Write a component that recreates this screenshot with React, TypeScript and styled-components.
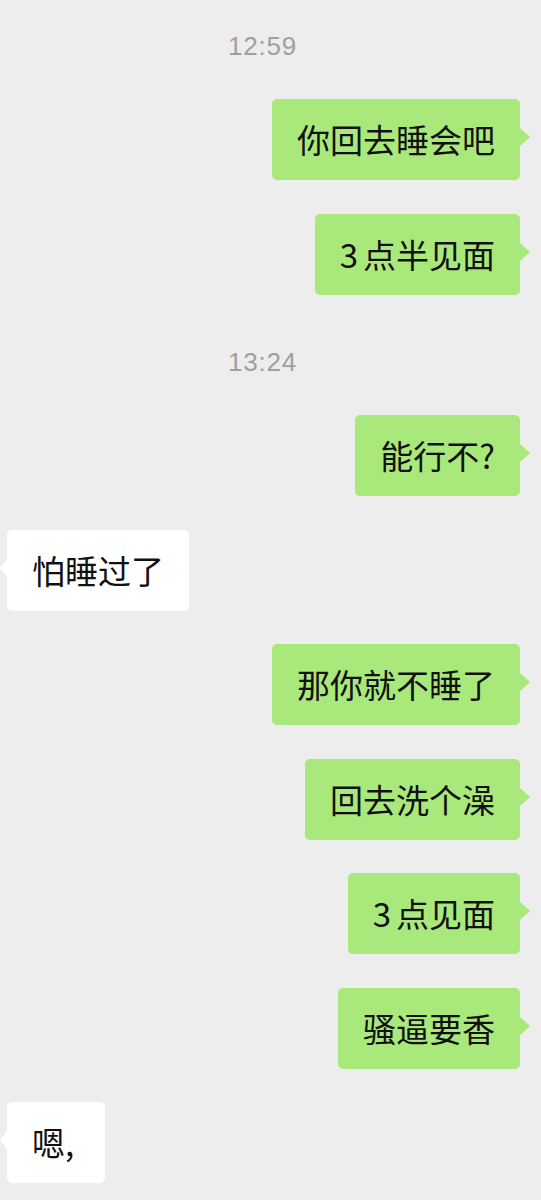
import styled, { createGlobalStyle, css } from "styled-components";

const GlobalStyle = createGlobalStyle`
  html, body {
    margin: 0;
    padding: 0;
    background: #ededed;
  }
  * {
    box-sizing: border-box;
  }
`;

type Side = "left" | "right";

type Item =
  | { kind: "time"; text: string }
  | { kind: "msg"; side: Side; text: string };

const items: Item[] = [
  { kind: "time", text: "12:59" },
  { kind: "msg", side: "right", text: "你回去睡会吧" },
  { kind: "msg", side: "right", text: "3点半见面" },
  { kind: "time", text: "13:24" },
  { kind: "msg", side: "right", text: "能行不?" },
  { kind: "msg", side: "left", text: "怕睡过了" },
  { kind: "msg", side: "right", text: "那你就不睡了" },
  { kind: "msg", side: "right", text: "回去洗个澡" },
  { kind: "msg", side: "right", text: "3点见面" },
  { kind: "msg", side: "right", text: "骚逼要香" },
  { kind: "msg", side: "left", text: "嗯," },
];

const Page = styled.div`
  min-height: 1200px;
  background: #ededed;
  padding: 31px 0 0;
  display: flex;
  flex-direction: column;
  font-family: "Noto Sans CJK SC", "Noto Sans", sans-serif;
`;

const TimeRow = styled.div`
  height: 30px;
  margin: 19px 0 38px;
  padding-right: 16px;
  display: flex;
  justify-content: center;
  align-items: center;
  font-family: "Liberation Sans", "Noto Sans", sans-serif;
  font-size: 26px;
  letter-spacing: 0.8px;
  color: #9f9f9f;

  &:first-child {
    margin-top: 0;
  }
`;

const MsgRow = styled.div<{ $side: Side }>`
  display: flex;
  margin-bottom: 33.5px;
  ${({ $side }) =>
    $side === "right"
      ? css`
          justify-content: flex-end;
          padding-right: 21px;
        `
      : css`
          justify-content: flex-start;
          padding-left: 7px;
        `}
`;

const Bubble = styled.div<{ $side: Side }>`
  position: relative;
  height: 81px;
  padding: 0 25px;
  display: flex;
  align-items: center;
  border-radius: 5px;
  font-size: 33px;
  line-height: 41px;
  color: #111111;
  white-space: nowrap;
  background: ${({ $side }) => ($side === "right" ? "#a9e97b" : "#ffffff")};

  &::after {
    content: "";
    position: absolute;
    top: 29px;
    width: 0;
    height: 0;
    border-top: 9px solid transparent;
    border-bottom: 9px solid transparent;
    ${({ $side }) =>
      $side === "right"
        ? css`
            right: -10px;
            border-left: 10px solid #a9e97b;
          `
        : css`
            left: -7px;
            border-right: 7px solid #ffffff;
          `}
  }
`;

// digits sit a little apart from the CJK text, as in the iOS font
const Digit = styled.span`
  margin-right: 5px;
`;

const Tail = styled.span`
  padding-right: 6px;
`;

function renderText(text: string) {
  const m = text.match(/^(\d)(.*)$/);
  if (m) {
    return (
      <>
        <Digit>{m[1]}</Digit>
        {m[2]}
      </>
    );
  }
  if (text.endsWith(",")) return <Tail>{text}</Tail>;
  return text;
}

export default function App() {
  return (
    <>
      <GlobalStyle />
      <Page>
        {items.map((item, i) =>
          item.kind === "time" ? (
            <TimeRow key={i}>{item.text}</TimeRow>
          ) : (
            <MsgRow key={i} $side={item.side}>
              <Bubble $side={item.side}>{renderText(item.text)}</Bubble>
            </MsgRow>
          )
        )}
      </Page>
    </>
  );
}
